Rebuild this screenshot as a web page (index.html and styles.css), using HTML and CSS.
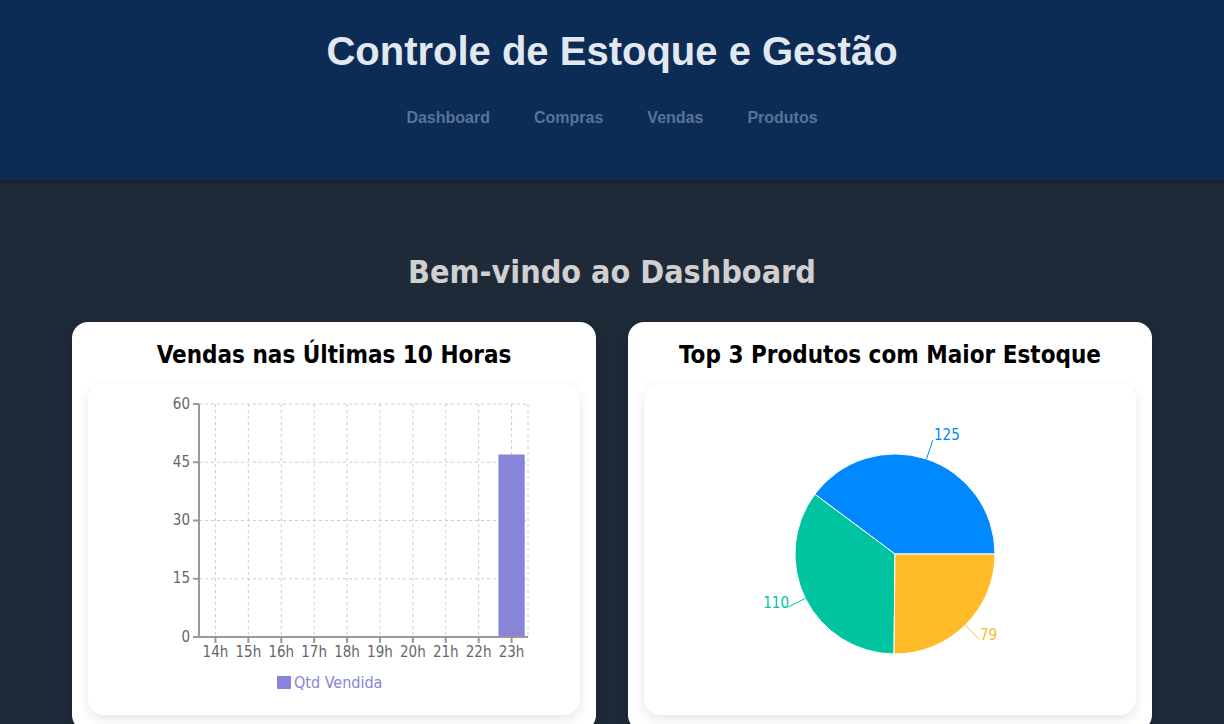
FILE: index.html
```html
<!DOCTYPE html>
<html lang="pt-BR">
<head>
<meta charset="utf-8">
<title>Controle de Estoque e Gestão</title>
<link rel="stylesheet" href="styles.css">
</head>
<body>
<header class="topbar">
  <h1 class="brand">Controle de Estoque e Gestão</h1>
  <nav class="nav">
    <a class="nav-link" href="#">Dashboard</a>
    <a class="nav-link" href="#">Compras</a>
    <a class="nav-link" href="#">Vendas</a>
    <a class="nav-link" href="#">Produtos</a>
  </nav>
</header>
<main class="main">
  <h2 class="welcome">Bem-vindo ao Dashboard</h2>
  <div class="cards">
    <section class="card">
      <h3 class="card-title">Vendas nas Últimas 10 Horas</h3>
      <div class="chart-box">
        <svg class="chart" width="492" height="332" viewBox="0 0 492 332">
          <g class="grid">
            <line x1="111" y1="21" x2="440" y2="21"/>
            <line x1="111" y1="79.25" x2="440" y2="79.25"/>
            <line x1="111" y1="137.5" x2="440" y2="137.5"/>
            <line x1="111" y1="195.75" x2="440" y2="195.75"/>
            <line x1="127.45" y1="21" x2="127.45" y2="254"/>
            <line x1="160.35" y1="21" x2="160.35" y2="254"/>
            <line x1="193.25" y1="21" x2="193.25" y2="254"/>
            <line x1="226.15" y1="21" x2="226.15" y2="254"/>
            <line x1="259.05" y1="21" x2="259.05" y2="254"/>
            <line x1="291.95" y1="21" x2="291.95" y2="254"/>
            <line x1="324.85" y1="21" x2="324.85" y2="254"/>
            <line x1="357.75" y1="21" x2="357.75" y2="254"/>
            <line x1="390.65" y1="21" x2="390.65" y2="254"/>
            <line x1="423.55" y1="21" x2="423.55" y2="254"/>
            <line x1="440" y1="21" x2="440" y2="254"/>
          </g>
          <rect class="bar" x="410.4" y="71.5" width="26.3" height="182.5"/>
          <g class="axis">
            <line x1="111" y1="21" x2="111" y2="254"/>
            <line x1="111" y1="254" x2="440" y2="254"/>
            <line x1="105" y1="21" x2="111" y2="21"/>
            <line x1="105" y1="79.25" x2="111" y2="79.25"/>
            <line x1="105" y1="137.5" x2="111" y2="137.5"/>
            <line x1="105" y1="195.75" x2="111" y2="195.75"/>
            <line x1="105" y1="254" x2="111" y2="254"/>
            <line x1="127.45" y1="254" x2="127.45" y2="260"/>
            <line x1="160.35" y1="254" x2="160.35" y2="260"/>
            <line x1="193.25" y1="254" x2="193.25" y2="260"/>
            <line x1="226.15" y1="254" x2="226.15" y2="260"/>
            <line x1="259.05" y1="254" x2="259.05" y2="260"/>
            <line x1="291.95" y1="254" x2="291.95" y2="260"/>
            <line x1="324.85" y1="254" x2="324.85" y2="260"/>
            <line x1="357.75" y1="254" x2="357.75" y2="260"/>
            <line x1="390.65" y1="254" x2="390.65" y2="260"/>
            <line x1="423.55" y1="254" x2="423.55" y2="260"/>
          </g>
          <g class="ytick">
            <text x="102" y="26">60</text>
            <text x="102" y="84">45</text>
            <text x="102" y="142">30</text>
            <text x="102" y="200">15</text>
            <text x="102" y="259">0</text>
          </g>
          <g class="xtick">
            <text x="127.45" y="274">14h</text>
            <text x="160.35" y="274">15h</text>
            <text x="193.25" y="274">16h</text>
            <text x="226.15" y="274">17h</text>
            <text x="259.05" y="274">18h</text>
            <text x="291.95" y="274">19h</text>
            <text x="324.85" y="274">20h</text>
            <text x="357.75" y="274">21h</text>
            <text x="390.65" y="274">22h</text>
            <text x="423.55" y="274">23h</text>
          </g>
          <rect class="legend-swatch" x="189" y="293" width="14" height="13"/>
          <text class="legend-text" x="206" y="305">Qtd Vendida</text>
        </svg>
      </div>
    </section>
    <section class="card">
      <h3 class="card-title">Top 3 Produtos com Maior Estoque</h3>
      <div class="chart-box">
        <svg class="chart" width="492" height="332" viewBox="0 0 492 332">
          <g transform="translate(1 1)">
            <path class="slice blue" d="M250 170 L350 170 A100 100 0 0 0 169.8 110.2 Z"/>
            <path class="slice green" d="M250 170 L169.8 110.2 A100 100 0 0 0 249 270 Z"/>
            <path class="slice yellow" d="M250 170 L249 270 A100 100 0 0 0 350 170 Z"/>
            <polyline class="lbl-line blue-s" points="281.5,75.1 287.8,56.1"/>
            <polyline class="lbl-line green-s" points="160.4,214.4 142.5,223.3"/>
            <polyline class="lbl-line yellow-s" points="320.3,241.1 334.4,255.3"/>
            <text class="pie-label blue-t" x="289" y="56">125</text>
            <text class="pie-label green-t end" x="144" y="224">110</text>
            <text class="pie-label yellow-t" x="335" y="256">79</text>
          </g>
        </svg>
      </div>
    </section>
  </div>
</main>
</body>
</html>
```
FILE: styles.css
```css
* { box-sizing: border-box; }
html, body { margin: 0; padding: 0; }
body {
  background: #1f2a38;
  font-family: "DejaVu Sans Condensed", "DejaVu Sans", sans-serif;
  overflow: hidden;
}
.topbar {
  background: #0c2b55;
  height: 180px;
  display: flex;
  flex-direction: column;
  align-items: center;
  box-shadow: 0 2px 4px rgba(0,0,0,0.25);
}
.brand {
  margin: 27px 0 0;
  font-family: "Liberation Sans", Arial, sans-serif;
  font-weight: 700;
  font-size: 40px;
  line-height: 48px;
  color: #e2e8f0;
}
.nav {
  display: flex;
  gap: 44px;
  margin-top: 33px;
}
.nav-link {
  font-family: "Liberation Sans", Arial, sans-serif;
  font-weight: 700;
  font-size: 16px;
  line-height: 20px;
  color: #5a7398;
  text-decoration: none;
}
.main {
  padding: 72px 72px 0;
}
.welcome {
  margin: 0 0 30px;
  text-align: center;
  font-size: 32px;
  line-height: 40px;
  font-weight: 700;
  color: #d0d0d0;
}
.cards {
  display: grid;
  grid-template-columns: 1fr 1fr;
  gap: 32px;
}
.card {
  background: #fff;
  border-radius: 16px;
  padding: 18px 16px 16px;
  box-shadow: 0 4px 12px rgba(0,0,0,0.15);
}
.card-title {
  margin: 0 0 13px;
  text-align: center;
  font-size: 24px;
  line-height: 30px;
  font-weight: 700;
  color: #000;
}
.chart-box {
  background: #fff;
  border-radius: 16px;
  height: 332px;
  box-shadow: 0 4px 12px rgba(0,0,0,0.1);
  overflow: hidden;
}
.chart { display: block; }
.grid line { stroke: #ccc; stroke-dasharray: 3 3; stroke-width: 1; }
.axis line { stroke: #999; stroke-width: 2; }
.bar { fill: #8884d8; }
.ytick text, .xtick text {
  font-family: "DejaVu Sans Condensed", "DejaVu Sans", sans-serif;
  font-size: 15px;
  fill: #666;
}
.ytick text { text-anchor: end; }
.xtick text { text-anchor: middle; }
.legend-swatch { fill: #8884d8; }
.legend-text {
  font-family: "DejaVu Sans Condensed", "DejaVu Sans", sans-serif;
  font-size: 16px;
  fill: #8884d8;
}
.slice { stroke: #fff; stroke-width: 1; }
.blue { fill: #0088fe; }
.green { fill: #00c49f; }
.yellow { fill: #ffbb28; }
.lbl-line { fill: none; stroke-width: 1; }
.blue-s { stroke: #0088fe; }
.green-s { stroke: #00c49f; }
.yellow-s { stroke: #ffbb28; }
.pie-label {
  font-family: "DejaVu Sans Condensed", "DejaVu Sans", sans-serif;
  font-size: 15px;
}
.pie-label.end { text-anchor: end; }
.blue-t { fill: #0088fe; }
.green-t { fill: #00c49f; }
.yellow-t { fill: #ffbb28; }
```
